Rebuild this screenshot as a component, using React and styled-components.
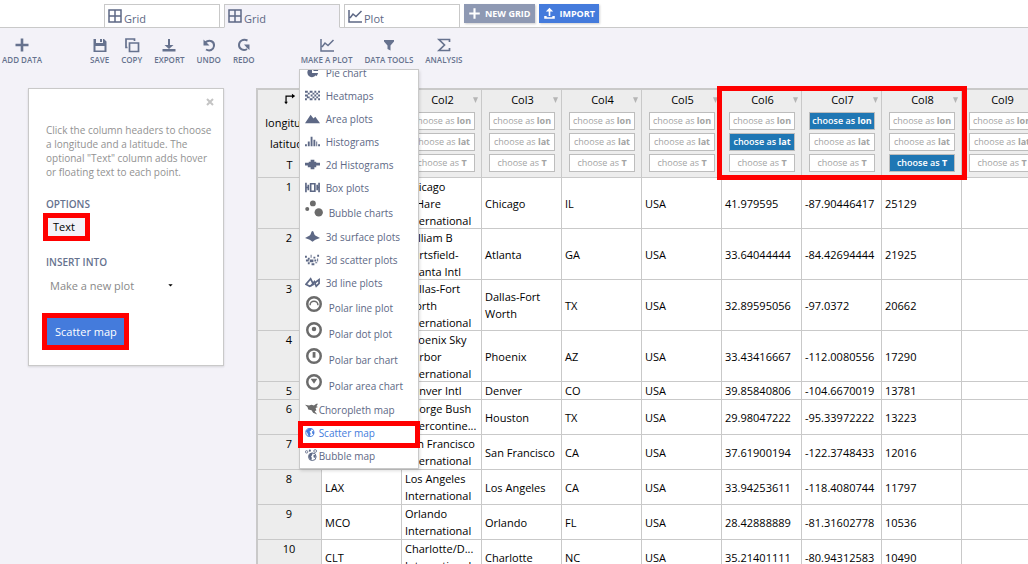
import { useState } from "react";
import styled, { createGlobalStyle, css } from "styled-components";

const GlobalStyle = createGlobalStyle`
  * {
    box-sizing: border-box;
  }
  body {
    margin: 0;
    background: #f3f2f8;
    font-family: "Open Sans", "Noto Sans", sans-serif;
    font-size: 11px;
    color: #000;
  }
  button, select {
    font-family: inherit;
  }
`;
const Page = styled.div`
  display: flex;
  flex-direction: column;
  height: 100vh;
  overflow: hidden;
`;
const TabBar = styled.nav`
  display: flex;
  align-items: flex-start;
  gap: 4px;
  height: 28px;
  padding: 4px 0 0 104px;
  background: #fff;
  box-shadow: inset 0 -1px #c9c9c9;
`;
const Tab = styled.a`
  display: flex;
  align-items: center;
  gap: 1px;
  width: 116px;
  height: 24px;
  padding: 4px 2px 0;
  border: 1px solid #c9c9c9;
  border-bottom-color: ${({ $active }) => ($active ? "#f3f2f8" : "#c9c9c9")};
  background: ${({ $active }) => ($active ? "#f3f2f8" : "#fff")};
  color: #5d6885;
  font-size: 11px;
  text-decoration: none;

  svg {
    margin-top: -4px;
  }
`;
const TabAction = styled.button`
  display: flex;
  align-items: center;
  gap: 4px;
  height: 19px;
  padding: 0 4px;
  border: 0;
  box-shadow: 1px 1px 2px #00000030;
  background: ${({ $primary }) => ($primary ? "#447bdc" : "#8e99b3")};
  color: #fff;
  font-size: 9px;
  font-weight: 700;
  white-space: nowrap;
`;
const Toolbar = styled.div`
  display: flex;
  flex: none;
  align-items: flex-start;
  height: 60px;
  padding: 9px 0 0 2px;
`;
const ToolGroup = styled.div`
  display: flex;
  gap: 12px;
  margin-right: ${({ $space }) => $space || 0}px;
`;
const Tool = styled.button`
  display: flex;
  flex-direction: column;
  align-items: center;
  padding: 0;
  border: 0;
  background: none;
  color: #66728e;
  font-size: 8px;
  font-weight: 600;
  line-height: 14px;
  white-space: nowrap;
`;
const MenuAnchor = styled.div`
  position: relative;
`;
const Menu = styled.div`
  position: absolute;
  top: 32px;
  left: -2px;
  z-index: 3;
  width: 120px;
  height: 400px;
  border: 1px solid #c9c9c9;
  background: #fff;
  box-shadow: 1px 2px 3px #00000020;
`;
const MenuList = styled.ul`
  display: flex;
  flex-direction: column;
  justify-content: flex-end;
  height: 100%;
  margin: 0;
  padding: 0;
  overflow: hidden;
  list-style: none;
`;
const MenuButton = styled.button`
  display: flex;
  align-items: center;
  gap: ${({ $tight }) => ($tight ? 1 : 6)}px;
  width: 100%;
  height: ${({ $large }) => ($large ? 26 : 23)}px;
  padding: ${({ $large }) => ($large ? "0 0 0 5px" : "0 0 2px 5px")};
  border: 0;
  background: none;
  color: ${({ $current }) => ($current ? "#447bdc" : "#5d6885")};
  font-size: 10px;
  line-height: 14px;
  white-space: nowrap;

  svg {
    flex: none;
    margin-bottom: ${({ $large }) => ($large ? 8 : 0)}px;
  }
`;
const MenuMark = styled.div`
  position: absolute;
  bottom: 20px;
  left: -2px;
  right: -2px;
  height: 27px;
  border: 5px solid #f00;
  pointer-events: none;
`;
const Workspace = styled.main`
  display: flex;
  align-items: flex-start;
  gap: 32px;
  padding-left: 28px;
`;
const Panel = styled.section`
  display: flex;
  flex: none;
  flex-direction: column;
  align-items: flex-start;
  width: 196px;
  padding: 5px 17px 20px;
  border: 1px solid #c9c9c9;
  background: #fff;
  box-shadow: 0 1px 2px #00000020;
`;
const CloseButton = styled.button`
  align-self: flex-end;
  margin-right: -9px;
  padding: 0 1px;
  border: 0;
  background: none;
  color: #c4c4c4;
  line-height: 14px;
`;
const PanelText = styled.p`
  margin: 15px 0 17px;
  color: #929292;
  font-size: 10px;
  line-height: 14px;
  white-space: nowrap;
`;
const PanelLabel = styled.label`
  color: #66728e;
  font-size: 10px;
  font-weight: 600;
  line-height: 16px;
`;
const marked = css`
  outline: 5px solid #f00;
`;
const OptionButton = styled.button`
  height: 18px;
  margin: 6px 0 18px 2px;
  padding: 0 10px 0 5px;
  border: 0;
  background: #f3f2f8;
  font-size: 11px;
  line-height: 18px;
  ${marked}
`;
const SelectBox = styled.div`
  display: flex;
  align-items: center;
  width: 132px;
  margin: 5px 0 23px;
  padding: 0 4px;
  color: #000;
`;
const Select = styled.select`
  flex: 1;
  height: 20px;
  padding: 0;
  border: 0;
  appearance: none;
  background: none;
  color: #888;
  font-size: 11px;
`;
const SubmitButton = styled.button`
  height: 27px;
  margin-left: 1px;
  padding: 0 7px 0 8px;
  border: 0;
  background: #447bdc;
  color: #fff;
  font-size: 11px;
  ${marked}
`;
const GridArea = styled.div`
  flex: 1;
  min-width: 0;
  border-top: 2px solid #c9c9c9;
  border-left: 2px solid #c9c9c9;
`;
const Sheet = styled.table`
  width: 864px;
  border-collapse: separate;
  border-spacing: 0;
  table-layout: fixed;
  background: #fff;
`;
const HeadCell = styled.th`
  position: relative;
  width: ${({ $width }) => $width}px;
  padding: 0;
  border-right: 1px solid #c9c9c9;
  border-bottom: 1px solid #c9c9c9;
  background: #ededed;
  font-weight: 400;
  vertical-align: top;
`;
const HeadStack = styled.div`
  display: flex;
  flex-direction: column;
  gap: 3px;
  height: 87px;
  padding: ${({ $corner }) => ($corner ? 0 : "0 6px 0 7px")};
  text-align: center;
`;
const CornerTitle = styled.span`
  height: 19px;
  padding-top: 2px;
`;
const CornerLabel = styled.span`
  height: 18px;
  line-height: 22px;
`;
const HeadTitle = styled.div`
  display: flex;
  align-items: center;
  height: 19px;
  margin-right: -5px;
  color: #b5b5b5;

  span {
    flex: 1;
    padding-left: 5px;
    color: #000;
  }
`;
const ChooseButton = styled.button`
  height: 18px;
  padding: 0;
  border: 1px solid #bdbdbd;
  background: ${({ $on }) => ($on ? "#1f77b4" : "#fff")};
  color: ${({ $on }) => ($on ? "#fff" : "#a3a3a3")};
  font-size: 9px;
  font-weight: ${({ $on }) => ($on ? 600 : 400)};
  line-height: 16px;
  white-space: nowrap;

  b {
    font-weight: 700;
  }
`;
const ColumnsMark = styled.div`
  position: absolute;
  top: -4px;
  left: -5px;
  z-index: 2;
  width: 250px;
  height: 94px;
  border: 5px solid #f00;
  pointer-events: none;
`;
const RowHead = styled.th`
  padding: 0 1px 0 0;
  border-right: 1px solid #c9c9c9;
  border-bottom: 1px solid #c9c9c9;
  background: #ededed;
  font-weight: 400;
  line-height: 17px;
  vertical-align: top;
`;
const Cell = styled.td`
  padding: 0 3px;
  border-right: 1px solid #c9c9c9;
  border-bottom: 1px solid #c9c9c9;
  vertical-align: middle;
`;
const CellText = styled.div`
  display: flex;
  align-items: center;
  max-height: 50px;
  line-height: 17px;
  white-space: pre;
`;

const icons = {
  grid: (
    <g fill="none" stroke="currentColor" strokeWidth="1.5">
      <path d="M2 2h12v12H2zM8 2v12M2 8h12" />
    </g>
  ),
  plot: (
    <path
      fill="none"
      stroke="currentColor"
      strokeWidth="1.5"
      d="M2 2v12h13M3 10l3-4 3 2.500L14.500 3"
    />
  ),
  plus: <path d="M6.700 1.500h2.600v5.200h5.200v2.600H9.300v5.200H6.700V9.300H1.500V6.700h5.200z" />,
  save: (
    <path
      fillRule="evenodd"
      d="M1.500 2H12l2.500 2.500V15h-13zM4 2v4h7V2h-1v3H8V2zM3.500 9v4.500h9V9z"
    />
  ),
  copy: (
    <g fill="none" stroke="currentColor" strokeWidth="1.700">
      <path d="M5.500 6h9v8.500h-9z" />
      <path d="M3.500 10.500H2v-8.500h8.500v2" />
    </g>
  ),
  export: <path d="M7 2h2v6h3.500L8 12 3.500 8H7zM1.500 12h13v2.500h-13z" />,
  undo: (
    <g>
      <path
        fill="none"
        stroke="currentColor"
        strokeWidth="2"
        d="M4 5.500C9 1.500 13.500 5 13 9s-4.500 5.500-8 3.500"
      />
      <path d="M2.500 2.500v6h6z" />
    </g>
  ),
  redo: (
    <g>
      <path
        fill="none"
        stroke="currentColor"
        strokeWidth="2"
        d="M11.500 3.500C7 1.500 3 4 3 8s4.500 6.500 8 4"
      />
      <path d="M8 7.500h5.500V13L11 11z" />
    </g>
  ),
  filter: <path d="M3 3h10v1.500L9.500 8.500V13.500L6.500 12V8.500L3 4.500z" />,
  sigma: (
    <path
      fill="none"
      stroke="currentColor"
      strokeWidth="1.700"
      d="M13.500 5V2.500H3l5.500 5.500L3 13.500h10.500V11"
    />
  ),
  import: (
    <path d="M8 1l4.500 4.500H9V11H7V5.500H3.500zM1.500 11h3v1.500h7V11h3v3.500h-13z" />
  ),
  pie: (
    <g>
      <path d="M7.500 3a5 5 0 1 0 5 5.500H7.500z" />
      <path d="M9 1.500a5 5 0 0 1 5 5H9zM9.500 8.500h4.500l-1.500 3.500z" />
    </g>
  ),
  heat: (
    <path d="M0 3h3v2H0zM5 3h3v2H5zM10 3h2v2h-2zM14 3h2v2h-2zM3 5h2v2H3zM8 5h2v2H8zM12 5h2v2h-2zM0 7h3v2H0zM6 7h2v2H6zM10 7h2v2h-2zM14 7h2v2h-2zM2 9h3v2H2zM8 9h2v2H8zM12 9h2v2h-2zM0 11h2v2H0zM5 11h3v2H5zM10 11h2v2h-2zM14 11h2v2h-2z" />
  ),
  area: <path d="M0 13L6 4l3 4 2-2 5 7z" />,
  histogram: (
    <path d="M0 11h2v2H0zM3 8h2v5H3zM6 3h2v10H6zM9 6h2v7H9zM12 8h1v5h-1zM14 11h2v2h-2z" />
  ),
  histogram2d: (
    <path d="M6 3h4v2h2v1h4v3h-4v2h-2v2H6v-2H3V9H0V6h4V5h2z" />
  ),
  box: (
    <path
      fill="none"
      stroke="currentColor"
      strokeWidth="1.800"
      d="M1 3v10M15 3v10M1 8h2.500M12.500 8H15M3.500 5v6M6 4h4.500v8H6zM13 5v6"
    />
  ),
  bubble: (
    <g fill="#6b6b6b">
      <circle cx="2" cy="8" r="1.800" />
      <circle cx="7" cy="3" r="2.600" />
      <circle cx="12.200" cy="11" r="3.700" />
    </g>
  ),
  surface: (
    <path d="M8 2c1.500 0 1.300 3.500 3 5L16 9.500l-5 2-3 2-3-2-5-2L5 7c1.700-1.500 1.500-5 3-5z" />
  ),
  scatter3d: (
    <path d="M0 4h2v2H0zM3 6h2v2H3zM6 3h1v3H6zM9 5h2v2H9zM13 3h2v2h-2zM1 8h3v2H1zM5 8h4v3H5zM10 8h2v2h-2zM13 7h1v3h-1zM3 11h2v2H3zM7 12h3v2H7zM11 11h2v1h-2z" />
  ),
  line3d: (
    <path
      fill="none"
      stroke="currentColor"
      strokeWidth="1.800"
      d="M1 10l5-6 3 6-4 2zM6 12l4-5 2 5 3-3V5l-4 3"
    />
  ),
  polarLine: (
    <g fill="none" stroke="#6b6b6b">
      <circle cx="8" cy="8" r="6" strokeWidth="2.200" />
      <path d="M4.500 9a3.500 3.500 0 0 1 7 0" strokeWidth="1.300" />
    </g>
  ),
  polarDot: (
    <g fill="#6b6b6b">
      <circle cx="8" cy="8" r="6" fill="none" stroke="#6b6b6b" strokeWidth="2.200" />
      <circle cx="8" cy="7" r="2" />
    </g>
  ),
  polarBar: (
    <g fill="#6b6b6b">
      <circle cx="8" cy="8" r="6" fill="none" stroke="#6b6b6b" strokeWidth="2.200" />
      <path d="M6.800 4.500h2.500v5H6.800z" />
    </g>
  ),
  polarArea: (
    <g fill="#6b6b6b">
      <circle cx="8" cy="8" r="6" fill="none" stroke="#6b6b6b" strokeWidth="2.200" />
      <path d="M5 5h6L8 9.500z" />
    </g>
  ),
  choropleth: (
    <path
      fill="#6b6b6b"
      d="M0 2l5 1 3-1 3 1 3-2h2l-2 3 2 1-3 1 1 3-2 1 3 4-5-2-2-3-4-1-1-3z"
    />
  ),
  globe: (
    <g>
      <circle cx="6" cy="8" r="5" fill="none" stroke="currentColor" strokeWidth="1.200" />
      <path d="M1 6l4-3h3.500l-1 2.500-2 1.500 1.500 2-1 3.500-2-.500L3 9zM8.500 6l2.500 1v3l-2-.500z" />
    </g>
  ),
  bubbleMap: (
    <g>
      <circle cx="9" cy="9.500" r="4.700" fill="none" stroke="currentColor" strokeWidth="1.200" />
      <path d="M4.500 8l3-3h2l-1 3-1 1 1 2-1 3-2-2zM10.500 7l3 1-1 3-2-1z" />
      <circle cx="2" cy="3.500" r="1.500" fill="none" stroke="currentColor" />
      <circle cx="6" cy="2" r="1.300" />
      <circle cx="12.500" cy="2.500" r="1.700" fill="none" stroke="currentColor" />
    </g>
  ),
  corner: (
    <path d="M3 12V4.300h8V2l4 3-4 3V5.700H4.500V12H6l-2.200 3L1.500 12H3z" />
  ),
  caret: <path d="M3.500 4h9L8 14z" />,
  arrow: <path d="M3 5h10l-5 5z" />,
  close: (
    <path
      fill="none"
      stroke="currentColor"
      strokeWidth="4"
      d="M2 2l12 12M14 2L2 14"
    />
  ),
};

function Icon({ name, size = 16 }) {
  return (
    <svg
      width={size}
      height={size}
      viewBox="0 0 16 16"
      fill="currentColor"
      aria-hidden="true"
    >
      {icons[name]}
    </svg>
  );
}

const menuItems = [
  { label: "Pie chart", icon: "pie" },
  { label: "Heatmaps", icon: "heat" },
  { label: "Area plots", icon: "area" },
  { label: "Histograms", icon: "histogram" },
  { label: "2d Histograms", icon: "histogram2d" },
  { label: "Box plots", icon: "box" },
  { label: "Bubble charts", icon: "bubble", large: true },
  { label: "3d surface plots", icon: "surface" },
  { label: "3d scatter plots", icon: "scatter3d" },
  { label: "3d line plots", icon: "line3d" },
  { label: "Polar line plot", icon: "polarLine", large: true },
  { label: "Polar dot plot", icon: "polarDot", large: true },
  { label: "Polar bar chart", icon: "polarBar", large: true },
  { label: "Polar area chart", icon: "polarArea", large: true },
  { label: "Choropleth map", icon: "choropleth", tight: true },
  { label: "Scatter map", icon: "globe", tight: true, current: true },
  { label: "Bubble map", icon: "bubbleMap", tight: true },
];

const roles = ["lon", "lat", "T"];

const rows = [
  ["ORD", "Chicago\nO'Hare\nInternational", "Chicago", "IL", "USA", "41.979595", "-87.90446417", "25129"],
  ["ATL", "William B\nHartsfield-\nAtlanta Intl", "Atlanta", "GA", "USA", "33.64044444", "-84.42694444", "21925"],
  ["DFW", "Dallas-Fort\nWorth\nInternational", "Dallas-Fort\nWorth", "TX", "USA", "32.89595056", "-97.0372", "20662"],
  ["PHX", "Phoenix Sky\nHarbor\nInternational", "Phoenix", "AZ", "USA", "33.43416667", "-112.0080556", "17290"],
  ["DEN", "Denver Intl", "Denver", "CO", "USA", "39.85840806", "-104.6670019", "13781"],
  ["IAH", "George Bush\nIntercontine...", "Houston", "TX", "USA", "29.98047222", "-95.33972222", "13223"],
  ["SFO", "San Francisco\nInternational", "San Francisco", "CA", "USA", "37.61900194", "-122.3748433", "12016"],
  ["LAX", "Los Angeles\nInternational", "Los Angeles", "CA", "USA", "33.94253611", "-118.4080744", "11797"],
  ["MCO", "Orlando\nInternational", "Orlando", "FL", "USA", "28.42888889", "-81.31602778", "10536"],
  ["CLT", "Charlotte/D...\nInternational", "Charlotte", "NC", "USA", "35.21401111", "-80.94312583", "10490"],
];

const columns = [1, 2, 3, 4, 5, 6, 7, 8, 9, 10];

function ColumnHead({ number, role, onChoose }) {
  return (
    <HeadCell scope="col" $width={80}>
      {number === 6 && <ColumnsMark />}
      <HeadStack>
        <HeadTitle>
          <span>Col{number}</span>
          <Icon name="caret" size={9} />
        </HeadTitle>
        {roles.map((item) => (
          <ChooseButton
            key={item}
            type="button"
            $on={role === item}
            onClick={() => onChoose(item, number)}
          >
            choose as <b>{item}</b>
          </ChooseButton>
        ))}
      </HeadStack>
    </HeadCell>
  );
}

function DataGrid() {
  const [chosen, setChosen] = useState({ lon: 7, lat: 6, T: 8 });

  const choose = (role, number) => setChosen({ ...chosen, [role]: number });

  return (
    <GridArea>
      <Sheet>
        <thead>
          <tr>
            <HeadCell scope="col" $width={64}>
              <HeadStack $corner>
                <CornerTitle>
                  <Icon name="corner" size={13} />
                </CornerTitle>
                <CornerLabel>longitude</CornerLabel>
                <CornerLabel>latitude</CornerLabel>
                <CornerLabel>T</CornerLabel>
              </HeadStack>
            </HeadCell>
            {columns.map((number) => (
              <ColumnHead
                key={number}
                number={number}
                role={roles.find((item) => chosen[item] === number)}
                onChoose={choose}
              />
            ))}
          </tr>
        </thead>
        <tbody>
          {rows.map((row, i) => (
            <tr key={row[0]}>
              <RowHead scope="row">{i + 1}</RowHead>
              {columns.map((number) => (
                <Cell key={number}>
                  <CellText>{row[number - 1]}</CellText>
                </Cell>
              ))}
            </tr>
          ))}
        </tbody>
      </Sheet>
    </GridArea>
  );
}

function PlotMenu() {
  return (
    <Menu>
      <MenuList>
        {menuItems.map((item) => (
          <li key={item.label}>
            <MenuButton
              type="button"
              $large={item.large}
              $tight={item.tight}
              $current={item.current}
            >
              <Icon
                name={item.icon}
                size={item.large ? 18 : item.tight ? 13 : 15}
              />
              {item.label}
            </MenuButton>
          </li>
        ))}
      </MenuList>
      <MenuMark />
    </Menu>
  );
}

function OptionsPanel() {
  return (
    <Panel>
      <CloseButton type="button" aria-label="Close">
        <Icon name="close" size={8} />
      </CloseButton>
      <PanelText>
        Click the column headers to choose
        <br />
        a longitude and a latitude. The
        <br />
        optional "Text" column adds hover
        <br />
        or floating text to each point.
      </PanelText>
      <PanelLabel htmlFor="option-text">OPTIONS</PanelLabel>
      <OptionButton type="button" id="option-text">
        Text
      </OptionButton>
      <PanelLabel htmlFor="insert-into">INSERT INTO</PanelLabel>
      <SelectBox>
        <Select id="insert-into">
          <option>Make a new plot</option>
        </Select>
        <Icon name="arrow" size={7} />
      </SelectBox>
      <SubmitButton type="button">Scatter map</SubmitButton>
    </Panel>
  );
}

function ToolButton({ icon, label }) {
  return (
    <Tool type="button">
      <Icon name={icon} />
      {label}
    </Tool>
  );
}

function App() {
  return (
    <Page>
      <GlobalStyle />
      <TabBar>
        <Tab href="#grid-1">
          <Icon name="grid" />
          Grid
        </Tab>
        <Tab href="#grid-2" $active>
          <Icon name="grid" />
          Grid
        </Tab>
        <Tab href="#plot">
          <Icon name="plot" />
          Plot
        </Tab>
        <TabAction type="button">
          <Icon name="plus" size={13} />
          NEW GRID
        </TabAction>
        <TabAction type="button" $primary>
          <Icon name="import" size={13} />
          IMPORT
        </TabAction>
      </TabBar>
      <Toolbar>
        <ToolGroup $space={48}>
          <ToolButton icon="plus" label="ADD DATA" />
        </ToolGroup>
        <ToolGroup $space={46}>
          <ToolButton icon="save" label="SAVE" />
          <ToolButton icon="copy" label="COPY" />
          <ToolButton icon="export" label="EXPORT" />
          <ToolButton icon="undo" label="UNDO" />
          <ToolButton icon="redo" label="REDO" />
        </ToolGroup>
        <ToolGroup>
          <MenuAnchor>
            <ToolButton icon="plot" label="MAKE A PLOT" />
            <PlotMenu />
          </MenuAnchor>
          <ToolButton icon="filter" label="DATA TOOLS" />
          <ToolButton icon="sigma" label="ANALYSIS" />
        </ToolGroup>
      </Toolbar>
      <Workspace>
        <OptionsPanel />
        <DataGrid />
      </Workspace>
    </Page>
  );
}

export default App;
